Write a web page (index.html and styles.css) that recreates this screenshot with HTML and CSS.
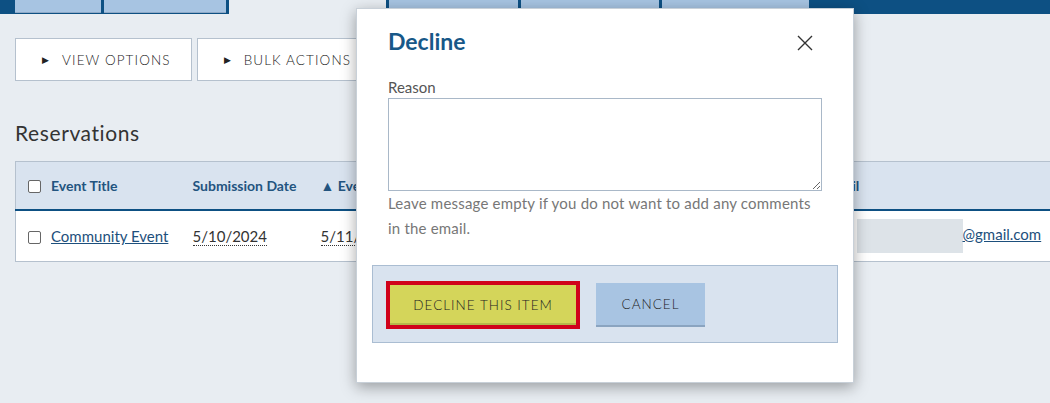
FILE: index.html
```html
<!DOCTYPE html>
<html lang="en">
<head>
    <meta charset="UTF-8">
    <meta name="viewport" content="width=device-width, initial-scale=1.0">
    <title>Reservations</title>
    <link rel="stylesheet" href="styles.css">
</head>
<body>
    <div class="tabbar">
        <div class="tab-group first">
            <span class="tab tab-a"></span>
            <span class="tab tab-b"></span>
        </div>
        <div class="tab-group second">
            <span class="tab tab-c"></span>
            <span class="tab tab-d"></span>
            <span class="tab tab-e"></span>
        </div>
    </div>

    <div class="page">
        <div class="toolbar">
            <button class="tool-btn"><span class="arrow">&#9654;</span>View Options</button>
            <button class="tool-btn"><span class="arrow">&#9654;</span>Bulk Actions</button>
        </div>

        <h2 class="section-title">Reservations</h2>

        <table class="grid">
            <colgroup>
                <col class="c-title">
                <col class="c-sub">
                <col class="c-date">
                <col class="c-email">
            </colgroup>
            <thead>
                <tr>
                    <th><span class="check"></span>Event Title</th>
                    <th>Submission Date</th>
                    <th>&#9650; Event Date</th>
                    <th>Email</th>
                </tr>
            </thead>
            <tbody>
                <tr>
                    <td><span class="check"></span><a href="#" class="link">Community Event</a></td>
                    <td><span class="dotted">5/10/2024</span></td>
                    <td><span class="dotted">5/11/2024</span></td>
                    <td><a href="#" class="link email"><span class="redact"></span>@gmail.com</a></td>
                </tr>
            </tbody>
        </table>
    </div>

    <div class="modal">
        <div class="modal-head">
            <h3 class="modal-title">Decline</h3>
            <button class="close" aria-label="Close">
                <svg width="16" height="16" viewBox="0 0 16 16">
                    <path d="M1 1 L15 15 M15 1 L1 15" stroke="#333" stroke-width="1.4" fill="none"/>
                </svg>
            </button>
        </div>
        <div class="modal-body">
            <label class="field-label" for="reason">Reason</label>
            <textarea id="reason" class="field"></textarea>
            <p class="help">Leave message empty if you do not want to add any comments in the email.</p>
        </div>
        <div class="modal-foot">
            <button class="btn btn-decline">Decline this item</button>
            <button class="btn btn-cancel">Cancel</button>
        </div>
    </div>
</body>
</html>
```

FILE: styles.css
```css
body {
    font-family: Lato, "Open Sans", sans-serif;
    background-color: #e8edf2;
    margin: 0;
    color: #333;
    overflow: hidden;
    height: 403px;
}
.tabbar {
    display: flex;
    height: 14px;
}
.tab-group {
    display: flex;
    gap: 3px;
    background-color: #0d5083;
}
.tab-group.first {
    padding: 0 3px 0 15px;
}
.tab-group.second {
    margin-left: 157px;
    padding-left: 3px;
    flex: 1;
}
.tab {
    height: 13px;
    background-color: #a7c4e2;
    border-bottom: 1px solid #8ea9c7;
    box-sizing: border-box;
}
.tab-a { width: 86px; }
.tab-b { width: 122px; }
.tab-c { width: 129px; }
.tab-d { width: 138px; }
.tab-e { width: 147px; }

.page {
    padding: 24px 0 0 15px;
}
.toolbar {
    display: flex;
    gap: 5px;
}
.tool-btn {
    height: 43px;
    background-color: #fff;
    border: 1px solid #b5c1ce;
    font-family: inherit;
    font-size: 13.5px;
    font-weight: 300;
    letter-spacing: 1.1px;
    text-transform: uppercase;
    color: #222;
    padding: 0 20px 0 26px;
    display: flex;
    align-items: center;
}
.tool-btn .arrow {
    font-size: 9px;
    margin-right: 12px;
}
.section-title {
    font-weight: 400;
    font-size: 21px;
    letter-spacing: 0.6px;
    margin: 39px 0 16px;
    color: #333;
}
.grid {
    border-collapse: collapse;
    width: 1050px;
    background-color: #fff;
    border: 1px solid #b5c1ce;
}
.c-title { width: 165px; }
.c-sub { width: 125px; }
.c-date { width: 505px; }
.grid th {
    background-color: #d9e3ef;
    text-align: left;
    font-size: 14px;
    font-weight: 700;
    color: #23547f;
    height: 47px;
    padding: 0 12px;
    border-bottom: 2px solid #0d5083;
    white-space: nowrap;
}
.grid td {
    height: 50px;
    padding: 0 12px;
    font-size: 15px;
    white-space: nowrap;
}
.check {
    display: inline-block;
    width: 11px;
    height: 11px;
    border: 1px solid #666;
    border-radius: 2px;
    background-color: #fff;
    vertical-align: -2px;
    margin-right: 10px;
}
.link {
    color: #1d4f7c;
}
.dotted {
    border-bottom: 1px dotted #333;
}
.email {
    margin-left: 31px;
}
.redact {
    display: inline-block;
    width: 106px;
    height: 34px;
    background-color: #dde3e8;
    vertical-align: middle;
}

.modal {
    position: absolute;
    left: 356px;
    top: 8px;
    width: 496px;
    height: 373px;
    background-color: #fff;
    border: 1px solid #c8d0d8;
    box-shadow: 0 4px 14px rgba(0, 0, 0, 0.35);
}
.modal-head {
    display: flex;
    justify-content: space-between;
    align-items: center;
    padding: 18px 40px 0 31px;
}
.modal-title {
    margin: 0;
    font-size: 23px;
    font-weight: 700;
    color: #175888;
}
.close {
    background: none;
    border: none;
    padding: 0;
    margin-top: 4px;
    width: 16px;
    height: 16px;
    display: flex;
}
.modal-body {
    padding: 23px 31px 0 31px;
}
.field-label {
    display: block;
    font-size: 15px;
    color: #555;
    margin-bottom: 2px;
}
.field {
    display: block;
    width: 434px;
    height: 93px;
    box-sizing: border-box;
    border: 1px solid #a9b8c8;
    margin: 0;
    resize: vertical;
}
.help {
    margin: 0;
    font-size: 15px;
    letter-spacing: 0.2px;
    line-height: 25px;
    color: #777;
    width: 430px;
}
.modal-foot {
    margin: 24px 15px 0;
    padding: 15px 13px 13px;
    background-color: #d9e3ef;
    border: 1px solid #aabdd2;
    display: flex;
    align-items: center;
    gap: 16px;
}
.btn {
    font-family: inherit;
    font-size: 13.5px;
    font-weight: 300;
    letter-spacing: 1px;
    text-transform: uppercase;
    color: #222;
    cursor: pointer;
}
.btn-decline {
    height: 48px;
    width: 194px;
    background-color: #d4d55a;
    border: 4px solid #d0021b;
    box-shadow: inset 0 -2px 0 #b5b64a;
}
.btn-cancel {
    height: 44px;
    width: 109px;
    background-color: #a8c4e2;
    border: none;
    border-bottom: 2px solid #8aa4c0;
}
```
